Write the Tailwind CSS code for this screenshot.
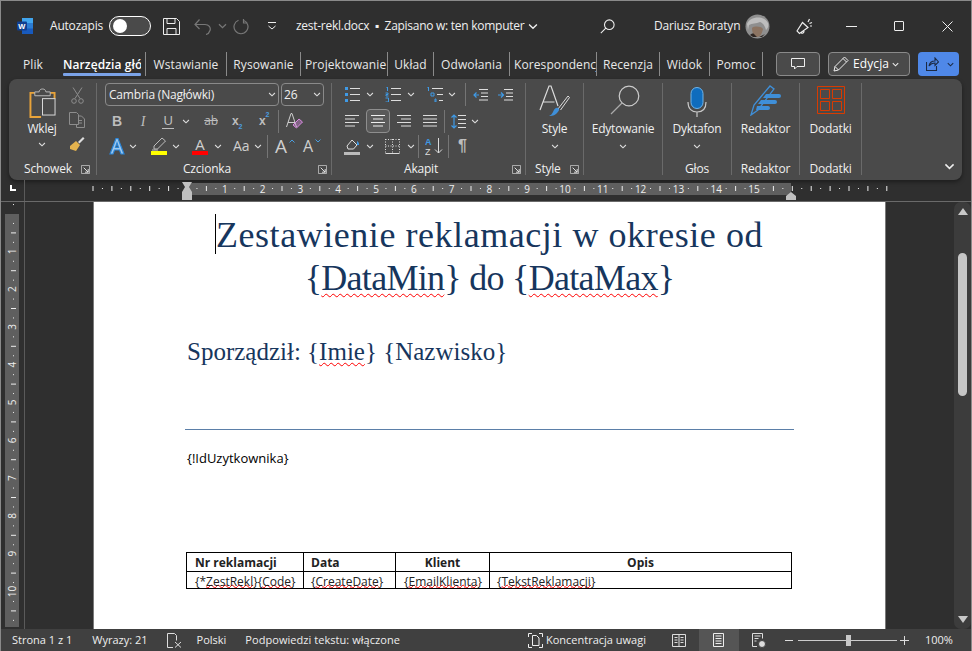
<!DOCTYPE html>
<html>

<head>
  <meta charset="UTF-8">
  <meta name="viewport" content="width=device-width, initial-scale=1.0">
  <script src="https://cdn.jsdelivr.net/npm/@tailwindcss/browser@4"></script>
  <title>zest-rekl.docx</title>
</head>

<body class="bg-[#2f2f2f]">
  <svg class="hidden">
    <symbol id="chev" viewBox="0 0 9 6"><path d="M1 1.2 4.5 4.6 8 1.2" fill="none" stroke="currentColor" stroke-width="1.3" /></symbol>
    <symbol id="launch" viewBox="0 0 10 10"><path d="M.5.5h9v9h-9z" fill="none" stroke="#bbb" /><path d="M3 3l5 5M8 4.5V8H4.5" fill="none" stroke="#eee" /></symbol>
    <symbol id="lines" viewBox="0 0 14 12"><path d="M0 .5h14M0 4h14M0 7.5h14M0 11h14" stroke="#ddd" fill="none" /></symbol>
  </svg>

  <div class="flex h-[651px] w-[972px] flex-col overflow-hidden border-x border-[#8a8a8a] border-t bg-[#2f2f2f] font-['Open_Sans','Noto_Sans',sans-serif] text-[12px] text-[#f0f0f0]">

    <!-- title bar -->
    <div class="flex h-[49px] shrink-0 items-center pt-[1px]">
      <svg class="ml-[16px] h-[18px] w-[17px]" viewBox="0 0 17 18">
        <path d="M5 1h10a1 1 0 0 1 1 1v14a1 1 0 0 1-1 1H5z" fill="#2b7cd3" />
        <path d="M5 1h11v5H5z" fill="#41a5ee" />
        <path d="M5 11.500h11V17H5z" fill="#185abd" />
        <rect x="0" y="4.500" width="10" height="9" rx="1" fill="#103f91" />
        <text x="1.300" y="12" fill="#fff" font-size="7.500" font-weight="700" font-family="Liberation Sans">W</text>
      </svg>
      <span class="ml-[16px] w-[52px] whitespace-nowrap tracking-[-0.2px]">Autozapis</span>
      <div class="ml-[7px] flex h-[20px] w-[42px] items-center rounded-full border border-white bg-[#4a4a4a] pl-[3px]">
        <div class="h-[14px] w-[14px] rounded-full bg-white"></div>
      </div>
      <svg class="ml-[12px] h-[17px] w-[17px]" viewBox="0 0 17 17" fill="none" stroke="#eee">
        <path d="M.5.500h13l3 3v13H.5zM4 .500v5h8v-5M4 16.500v-6h9v6" />
      </svg>
      <svg class="ml-[14px] h-[17px] w-[19px]" viewBox="0 0 19 17" fill="none" stroke="#777" stroke-width="1.200">
        <path d="M1 6.500h10a5.500 5.500 0 0 1 0 0c4 0 6 3 5 6-.600 2-2 3.500-4 4M5.500 1.500 1 6.500l4.500 4.500" />
      </svg>
      <svg class="ml-[5px] h-[6px] w-[9px] text-[#777]"><use href="#chev" /></svg>
      <svg class="ml-[6px] h-[17px] w-[17px]" viewBox="0 0 17 17" fill="none" stroke="#777" stroke-width="1.200">
        <path d="M10.500 2.200a7 7 0 1 1-5 0M10.500 1v4h4" />
      </svg>
      <svg class="ml-[17px] h-[8px] w-[10px]" viewBox="0 0 10 8" fill="none" stroke="#eee">
        <path d="M1 .500h8M1.500 4 5 7l3.500-3" />
      </svg>
      <span class="ml-[19px] w-[231px] whitespace-nowrap tracking-[-0.27px]">zest-rekl.docx&nbsp; ▪ &nbsp;Zapisano w: ten komputer</span>
      <svg class="ml-[1px] h-[7px] w-[10px] text-[#eee]"><use href="#chev" /></svg>
      <svg class="ml-[62px] h-[15px] w-[15px]" viewBox="0 0 15 15" fill="none" stroke="#eee" stroke-width="1.100">
        <circle cx="9.300" cy="5.700" r="4.800" /><path d="M5.800 9.200 .8 14.200" />
      </svg>
      <span class="ml-[39px] w-[83px] whitespace-nowrap tracking-[-0.2px]">Dariusz Boratyn</span>
      <svg class="ml-[8px] h-[25px] w-[25px]" viewBox="0 0 25 25">
        <circle cx="12.500" cy="12.500" r="12" fill="#8f8f8f" />
        <path d="M2 10C4 3 18 0 23 9c1 3 0 5-2 7-1-4-3-7-6-8-4 2-8 1-11 3l-1 5z" fill="#bdbdbd" />
        <path d="M7 14c2-2 9-2 11 1-1 5-3 8-6 8s-5-4-5-9z" fill="#8c7462" />
        <path d="M5 21c1-1 3-2 4-1l3 3H8zM20 20l-3 3h-3z" fill="#2f2723" />
      </svg>
      <svg class="ml-[26px] h-[18px] w-[17px]" viewBox="0 0 17 18" fill="none" stroke="#eee" stroke-width="1.200">
        <path d="M1 14 6.500 5.500 12 10.500 3.500 16.500zM5 15.500c1.500 1.500 3 .5 3-1.500M12 5l1.500-3M13.500 6.500 16 5.500M14 9h2" />
      </svg>
      <div class="ml-[33px] h-[1px] w-[11px] bg-[#eee]"></div>
      <div class="ml-[37px] h-[10px] w-[10px] rounded-[1px] border border-[#eee]"></div>
      <svg class="ml-[38px] h-[11px] w-[11px]" viewBox="0 0 11 11" stroke="#eee"><path d="M.5.500l10 10M10.500.500l-10 10" /></svg>
    </div>

    <!-- tabs -->
    <div class="flex h-[29px] shrink-0 items-start pt-[2px] text-[12px] tracking-[0.1px] text-[#e8e8e8]">
      <div class="ml-[22px] flex h-[24px] items-center pt-[2px]">Plik</div>
      <div class="relative ml-[20px] flex h-[24px] w-[78px] items-center overflow-hidden pt-[2px] whitespace-nowrap font-semibold text-white">Narzędzia główne
        <div class="absolute right-0 bottom-0 left-0 h-[3px] rounded-[1px] bg-[#7ba3e8]"></div>
      </div>
      <div class="ml-[4px] flex h-[24px] items-start [&>div]:flex [&>div]:h-[24px] [&>div]:items-center [&>div]:justify-center [&>div]:overflow-hidden [&>div]:pt-[2px] [&>div]:whitespace-nowrap [&>div]:border-l [&>div]:border-[#8a8a8a]">
        <div class="w-[81px]">Wstawianie</div>
        <div class="w-[74px]">Rysowanie</div>
        <div class="w-[87px] justify-start! pl-[4px]">Projektowanie</div>
        <div class="w-[46px]">Układ</div>
        <div class="w-[76px]">Odwołania</div>
        <div class="w-[87px] justify-start! pl-[4px]">Korespondencja</div>
        <div class="w-[63px]">Recenzja</div>
        <div class="w-[50px]">Widok</div>
        <div class="w-[53px]">Pomoc</div>
        <div class="w-0"></div>
      </div>
      <div class="ml-[13px] flex h-[24px] w-[44px] items-center justify-center rounded-[4px] border border-[#8a8a8a] bg-[#4a4a4a]">
        <svg class="h-[12px] w-[14px]" viewBox="0 0 14 12" fill="none" stroke="#eee"><path d="M.5.500h13v8H6L3.500 11V8.500h-3z" /></svg>
      </div>
      <div class="ml-[8px] flex h-[24px] w-[82px] items-center rounded-[4px] border border-[#8a8a8a] bg-[#4a4a4a] pl-[4px] text-white">
        <svg class="h-[16px] w-[16px]" viewBox="0 0 16 16" fill="none" stroke="#eee"><path d="M1 15l1-4.500L11.500 1 15 4.500 5.500 14zM2 10.500 5.500 14M10 2.500 13.500 6" /></svg>
        <span class="ml-[4px]">Edycja</span>
        <svg class="ml-[3px] h-[5px] w-[7px] text-[#eee]"><use href="#chev" /></svg>
      </div>
      <div class="ml-[8px] flex h-[24px] w-[41px] items-center rounded-[4px] bg-[#4f88e8] pl-[8px]">
        <svg class="h-[14px] w-[13px]" viewBox="0 0 13 14" fill="none" stroke="#1c2b45" stroke-width="1.100"><path d="M.5 5v8.500h10V9M3 9c.5-3 3-5 6-5V1l3.500 4L9 8.500V6C6.500 6 4.500 7 3 9z" /></svg>
        <svg class="ml-[8px] h-[5px] w-[7px] text-[#1c2b45]"><use href="#chev" /></svg>
      </div>
    </div>

    <!-- ribbon -->
    <div class="ml-[8px] flex h-[101px] w-[953px] shrink-0 items-stretch rounded-lg bg-[#4a4a4a] pt-[4px] pb-[5px] tracking-[-0.2px] text-[#f0f0f0] shadow-[0_2px_4px_rgba(0,0,0,0.4)]">

      <!-- schowek -->
      <div class="flex w-[88px] shrink-0 flex-col border-r border-[#6a6a6a]">
        <div class="flex h-[80px]">
          <div class="ml-[13px] flex w-[40px] flex-col items-center">
            <svg class="mt-[4px] h-[31px] w-[27px]" viewBox="0 0 28 32" fill="none">
              <path d="M6 6H1.500v25h11" stroke="#e8a33a" stroke-width="2" /><path d="M22 6h4.500v6" stroke="#e8a33a" stroke-width="2" />
              <path d="M6 9V5h4.500c0-4 7-4 7 0H22v4z" stroke="#bbb" />
              <rect x="14" y="12" width="13" height="17" fill="#4a4a4a" stroke="#ddd" />
            </svg>
            <span class="mt-[2px]">Wklej</span>
            <svg class="mt-[4px] h-[5px] w-[8px] text-[#ddd]"><use href="#chev" /></svg>
          </div>
          <div class="ml-[7px] flex flex-col items-center gap-[8px] pt-[4px]">
            <svg class="h-[17px] w-[13px]" viewBox="0 0 13 17" fill="none" stroke="#8d8d8d"><path d="M2 .5l7 11M11 .5l-7 11" /><circle cx="3" cy="14" r="2.300" /><circle cx="10" cy="14" r="2.300" /></svg>
            <svg class="h-[16px] w-[16px]" viewBox="0 0 16 16" fill="none" stroke="#8d8d8d"><path d="M.5.500h7l2 2v10h-9zM9.500 4h3l3 3v8.500h-8v-3M9 8.500h4M9 11h4" /></svg>
            <svg class="h-[15px] w-[16px]" viewBox="0 0 16 15"><path d="M9 6l5-5 1.500 1.500-5 5z" fill="#ddd" /><path d="M1 10l6-5 4 4-4 6-6-2z" fill="#e4b34e" /></svg>
          </div>
        </div>
        <div class="flex h-[12px] items-center justify-between pr-[6px] pl-[15px]">
          <span>Schowek</span>
          <svg class="h-[9px] w-[9px]"><use href="#launch" /></svg>
        </div>
      </div>

      <!-- czcionka -->
      <div class="flex w-[235px] shrink-0 flex-col border-r border-[#6a6a6a] pl-[8px]">
        <div class="flex h-[24px] gap-[2px]">
          <div class="flex h-[23px] w-[174px] items-center justify-between rounded-[4px] border border-[#8a8a8a] pr-[2px] pl-[3px]">
            <span>Cambria (Nagłówki)</span>
            <svg class="h-[5px] w-[8px] text-[#ddd]"><use href="#chev" /></svg>
          </div>
          <div class="flex h-[23px] w-[43px] items-center justify-between rounded-[4px] border border-[#8a8a8a] pr-[2px] pl-[2px]">
            <span>26</span>
            <svg class="h-[5px] w-[8px] text-[#ddd]"><use href="#chev" /></svg>
          </div>
        </div>

        <div class="mt-[2px] flex h-[26px] items-center text-[#bdbdbd]">
          <span class="ml-[6px] w-[12px] text-center font-['Liberation_Sans'] text-[14px] font-bold">B</span>
          <span class="ml-[14px] w-[12px] text-center font-['Liberation_Serif'] text-[14px] italic">I</span>
          <span class="ml-[13px] w-[12px] border-b border-[#bdbdbd] text-center font-['Liberation_Sans'] text-[13px] leading-[15px]">U</span>
          <svg class="ml-[8px] h-[5px] w-[8px] text-[#ddd]"><use href="#chev" /></svg>
          <span class="ml-[13px] w-[16px] text-center text-[12px] leading-[12px] line-through">ab</span>
          <span class="ml-[13px] flex w-[13px] items-end font-['Liberation_Sans'] text-[12px] font-bold">x<span class="mb-[-2px] text-[7px] text-[#4a9ee0]">2</span></span>
          <span class="ml-[14px] flex w-[13px] items-start font-['Liberation_Sans'] text-[12px] font-bold">x<span class="mt-[-2px] text-[7px] text-[#4a9ee0]">2</span></span>
          <div class="ml-[6px] h-[23px] w-[1px] bg-[#757575]"></div>
          <svg class="ml-[7px] h-[18px] w-[17px]" viewBox="0 0 17 18" fill="none"><path d="M.5 15 5 1.500h1L10.500 15M2 10.500h7" stroke="#cfcfcf" /><path d="M7 13l6-6 3.500 3-6 6z" stroke="#d88ae0" fill="#d88ae0" fill-opacity=".4" /></svg>
        </div>

        <div class="flex h-[26px] items-center text-[#cfcfcf]">
          <svg class="ml-[4px] h-[18px] w-[16px]" viewBox="0 0 16 18" fill="none"><path d="M1 17 7 1.500h2L15 17h-3l-1.500-4h-5L4 17zM6.500 10.500h3L8 6z" fill="#9ec9ee" stroke="#2a85d8" stroke-width="1.200" /></svg>
          <svg class="ml-[4px] h-[5px] w-[8px] text-[#ddd]"><use href="#chev" /></svg>
          <div class="ml-[14px] flex w-[16px] flex-col items-center">
            <svg class="h-[14px] w-[15px]" viewBox="0 0 15 14" fill="none" stroke="#bdbdbd"><path d="M2 9 10 1l3.500 3-8 8H2zM0 13h6" /></svg>
            <div class="h-[4px] w-[16px] bg-[#ffff00]"></div>
          </div>
          <svg class="ml-[5px] h-[5px] w-[8px] text-[#ddd]"><use href="#chev" /></svg>
          <div class="ml-[12px] flex w-[16px] flex-col items-center">
            <span class="h-[14px] text-[15px] leading-[14px]">A</span>
            <div class="h-[4px] w-[16px] bg-[#ff0000]"></div>
          </div>
          <svg class="ml-[6px] h-[5px] w-[8px] text-[#ddd]"><use href="#chev" /></svg>
          <span class="ml-[11px] w-[18px] text-[14px] leading-[14px]">Aa</span>
          <svg class="ml-[3px] h-[5px] w-[8px] text-[#ddd]"><use href="#chev" /></svg>
          <div class="ml-[5px] h-[23px] w-[1px] bg-[#757575]"></div>
          <span class="ml-[7px] w-[13px] text-[19px] leading-[20px]">A</span>
          <svg class="mb-[10px] ml-[1px] h-[4px] w-[6px]" viewBox="0 0 6 4" fill="none" stroke="#4a9ee0"><path d="M.5 3.500 3 1l2.500 2.500" /></svg>
          <span class="ml-[8px] w-[11px] text-[16px] leading-[20px]">A</span>
          <svg class="mb-[10px] ml-[1px] h-[4px] w-[6px]" viewBox="0 0 6 4" fill="none" stroke="#4a9ee0"><path d="M.5.500 3 3 5.500.5" /></svg>
        </div>

        <div class="mt-[4px] flex h-[12px] items-center justify-between pr-[4px]">
          <span class="ml-[78px]">Czcionka</span>
          <svg class="h-[9px] w-[9px]"><use href="#launch" /></svg>
        </div>
      </div>

      <!-- akapit -->
      <div class="flex w-[194px] shrink-0 flex-col border-r border-[#6a6a6a]">
        <div class="flex h-[24px] items-center">
          <svg class="ml-[13px] h-[15px] w-[15px]" viewBox="0 0 15 15"><path d="M0 0h3v3H0zM0 6h3v3H0zM0 12h3v3H0z" fill="#3f9ae6" /><path d="M5 1.500h10M5 7.500h10M5 13.500h10" stroke="#ddd" /></svg>
          <svg class="ml-[6px] h-[5px] w-[8px] text-[#ddd]"><use href="#chev" /></svg>
          <svg class="ml-[11px] h-[15px] w-[16px]" viewBox="0 0 16 15"><path d="M1 0h1.500v4M.5 6h2.500v1.500H1V9h2.500M.5 11h3v4h-3" fill="none" stroke="#3f9ae6" /><path d="M6 1.500h10M6 7.500h10M6 13.500h10" stroke="#ddd" /></svg>
          <svg class="ml-[6px] h-[5px] w-[8px] text-[#ddd]"><use href="#chev" /></svg>
          <svg class="ml-[11px] h-[15px] w-[17px]" viewBox="0 0 17 15"><path d="M1 0h1.500v4M5 6h3v3H5zM9 12h1v3H9z" fill="none" stroke="#3f9ae6" /><path d="M6 1.500h11M11 7.500h6M13 13.500h4" stroke="#ddd" /></svg>
          <svg class="ml-[5px] h-[5px] w-[8px] text-[#ddd]"><use href="#chev" /></svg>
          <div class="ml-[9px] h-[23px] w-[1px] bg-[#757575]"></div>
          <svg class="ml-[7px] h-[12px] w-[15px]" viewBox="0 0 15 12"><path d="M6 .5h9M8 4h7M8 7.500h7M6 11h9" stroke="#ddd" /><path d="M6 6H1M3.500 3.500 1 6l2.500 2.500" fill="none" stroke="#3f9ae6" stroke-width="1.200" /></svg>
          <svg class="ml-[10px] h-[12px] w-[15px]" viewBox="0 0 15 12"><path d="M6 .5h9M8 4h7M8 7.500h7M6 11h9" stroke="#ddd" /><path d="M0 6h5M3 3.500 5.500 6 3 8.500" fill="none" stroke="#3f9ae6" stroke-width="1.200" /></svg>
        </div>

        <div class="mt-[2px] flex h-[26px] items-center">
          <svg class="ml-[13px] h-[12px] w-[14px]" viewBox="0 0 14 12"><path d="M0 .5h14M0 4h10M0 7.500h14M0 11h10" stroke="#ddd" /></svg>
          <div class="ml-[7px] flex h-[24px] w-[24px] items-center justify-center rounded-[4px] border border-[#8e8e8e] bg-[#5a5a5a]">
            <svg class="h-[12px] w-[14px]" viewBox="0 0 14 12"><path d="M0 .5h14M2 4h10M0 7.500h14M2 11h10" stroke="#eee" /></svg>
          </div>
          <svg class="ml-[7px] h-[12px] w-[14px]" viewBox="0 0 14 12"><path d="M0 .5h14M4 4h10M0 7.500h14M4 11h10" stroke="#ddd" /></svg>
          <svg class="ml-[12px] h-[12px] w-[14px]"><use href="#lines" /></svg>
          <div class="ml-[7px] h-[23px] w-[1px] bg-[#757575]"></div>
          <svg class="ml-[6px] h-[15px] w-[15px]" viewBox="0 0 15 15"><path d="M3 1v13M.5 3.500 3 1l2.500 2.500M.5 11.500 3 14l2.500-2.500" fill="none" stroke="#3f9ae6" stroke-width="1.200" /><path d="M7 1.500h8M7 5.500h8M7 9.500h8M7 13.500h8" stroke="#ddd" /></svg>
          <svg class="ml-[5px] h-[5px] w-[8px] text-[#ddd]"><use href="#chev" /></svg>
        </div>

        <div class="flex h-[26px] items-center">
          <svg class="ml-[12px] h-[17px] w-[16px]" viewBox="0 0 16 17"><path d="M3 8l5-6 5 5-3.500 4H4z" fill="none" stroke="#ddd" /><path d="M13 3c2 1 2 3 2 4h-2z" fill="#3f9ae6" /><path d="M0 14h16v3H0z" fill="#bbb" /></svg>
          <svg class="ml-[6px] h-[5px] w-[8px] text-[#ddd]"><use href="#chev" /></svg>
          <svg class="ml-[11px] h-[16px] w-[15px]" viewBox="0 0 15 16" fill="none" stroke="#ddd"><path d="M.5 15.500h14" /><path d="M.5 1.500h14M.5 1v14M14.500 1v14M7.500 1v14M.5 8h14" stroke-dasharray="1 1.500" /></svg>
          <svg class="ml-[7px] h-[5px] w-[8px] text-[#ddd]"><use href="#chev" /></svg>
          <div class="ml-[3px] h-[23px] w-[1px] bg-[#757575]"></div>
          <svg class="ml-[6px] h-[18px] w-[18px]" viewBox="0 0 18 18" fill="none"><text x="0" y="8" font-size="9" font-weight="700" fill="#3f9ae6" font-family="Liberation Sans">A</text><text x="0" y="17.500" font-size="9" fill="#ddd" font-family="Liberation Sans">Z</text><path d="M13.500 1v15M10 12.500l3.500 3.500 3.500-3.500" stroke="#ddd" /></svg>
          <div class="ml-[5px] h-[23px] w-[1px] bg-[#757575]"></div>
          <span class="ml-[9px] font-['Liberation_Sans'] text-[16px] leading-[16px] font-bold text-[#bdbdbd]">¶</span>
        </div>

        <div class="mt-[4px] flex h-[12px] items-center justify-between pr-[4px]">
          <span class="ml-[72px]">Akapit</span>
          <svg class="h-[9px] w-[9px]"><use href="#launch" /></svg>
        </div>
      </div>

      <!-- style -->
      <div class="flex w-[58px] shrink-0 flex-col border-r border-[#6a6a6a]">
        <div class="flex h-[80px] flex-col items-center">
          <svg class="mt-[2px] h-[33px] w-[31px]" viewBox="0 0 31 33" fill="none">
            <path d="M1 25 10 1h2l7 20M4.500 17h11" stroke="#ddd" stroke-width="1.200" />
            <path d="M19 24 29 11l1.500 1.500-9 12.500" stroke="#ddd" /><path d="M10 31c5 0 6-1 8-3 2-2 3-4 1-5-3-1-4 2-5 4-1 2-2 3-4 4z" fill="#3f8fd8" />
          </svg>
          <span class="mt-[2px]">Style</span>
          <svg class="mt-[6px] h-[5px] w-[8px] text-[#ddd]"><use href="#chev" /></svg>
        </div>
        <div class="flex h-[12px] items-center justify-between pr-[4px] pl-[9px]">
          <span>Style</span>
          <svg class="h-[9px] w-[9px]"><use href="#launch" /></svg>
        </div>
      </div>

      <!-- edytowanie -->
      <div class="flex w-[79px] shrink-0 flex-col items-center border-r border-[#6a6a6a]">
        <svg class="mt-[2px] ml-[3px] h-[30px] w-[30px]" viewBox="0 0 30 30" fill="none" stroke="#ccc" stroke-width="1.200">
          <circle cx="19" cy="11" r="9.800" /><path d="M12 18 1 29" stroke="#aaa" />
        </svg>
        <span class="mt-[5px]">Edytowanie</span>
        <svg class="mt-[6px] h-[5px] w-[8px] text-[#ddd]"><use href="#chev" /></svg>
      </div>

      <!-- glos -->
      <div class="flex w-[69px] shrink-0 flex-col items-center border-r border-[#6a6a6a]">
        <div class="flex h-[80px] flex-col items-center">
          <svg class="mt-[4px] h-[30px] w-[20px]" viewBox="0 0 20 30" fill="none">
            <rect x="4" y="0.500" width="12" height="21" rx="6" fill="#0f6cbd" stroke="#6fb4ea" />
            <path d="M1 15c0 7 4 10 9 10s9-3 9-10M10 25v5" stroke="#c8c8c8" stroke-width="1.200" />
          </svg>
          <span class="mt-[3px]">Dyktafon</span>
          <svg class="mt-[6px] h-[5px] w-[8px] text-[#ddd]"><use href="#chev" /></svg>
        </div>
        <span class="h-[12px] leading-[12px]">Głos</span>
      </div>

      <!-- redaktor -->
      <div class="flex w-[68px] shrink-0 flex-col items-center border-r border-[#6a6a6a]">
        <div class="flex h-[80px] flex-col items-center">
          <svg class="mt-[2px] h-[31px] w-[31px]" viewBox="0 0 31 31" fill="none">
            <path d="M1 30 4 20 20 1l4 3L8 25z" stroke="#3f8fd8" stroke-width="1.300" />
            <path d="M16 9h13a2 2 0 0 1 0 4H13zM11 15h14a2 2 0 0 1 0 4H8zM7 21h11a2 2 0 0 1 0 4H6z" fill="#3f8fd8" />
          </svg>
          <span class="mt-[4px]">Redaktor</span>
        </div>
        <span class="h-[12px] leading-[12px]">Redaktor</span>
      </div>

      <!-- dodatki -->
      <div class="flex w-[62px] shrink-0 flex-col items-center border-r border-[#6a6a6a]">
        <div class="flex h-[80px] flex-col items-center">
          <svg class="mt-[3px] h-[28px] w-[28px]" viewBox="0 0 28 28" fill="none" stroke="#d83b01">
            <path d="M.5.500h27v27H.5zM3.500 3.500h9v9h-9zM15.500 3.500h9v9h-9zM3.500 15.500h9v9h-9zM15.500 15.500h9v9h-9z" />
          </svg>
          <span class="mt-[6px]">Dodatki</span>
        </div>
        <span class="h-[12px] leading-[12px]">Dodatki</span>
      </div>

      <div class="flex flex-1 items-end justify-end pr-[7px] pb-[5px]">
        <svg class="h-[7px] w-[11px] text-[#eee]"><use href="#chev" /></svg>
      </div>
    </div>

    <!-- horizontal ruler -->
    <div class="flex h-[22px] shrink-0 items-start border-b border-[#6a6a6a]">
      <div class="relative h-[21px] w-[24px] shrink-0 border-r border-[#5a5a5a]">
        <div class="absolute top-[5px] left-[9px] h-[6px] w-[6px] border-b-2 border-l-2 border-white"></div>
      </div>
      <svg id="hruler" class="h-[21px] w-[946px]" viewBox="24 180 946 21"></svg>
    </div>

    <!-- document area -->
    <div class="flex min-h-0 flex-1">
      <div class="relative w-[24px] shrink-0 border-r border-[#5a5a5a]">
        <svg id="vruler" class="h-[425px] w-[23px]" viewBox="0 203 23 425"></svg>
      </div>

      <div class="w-[68px] shrink-0"></div>

      <!-- page -->
      <div class="relative w-[793px] shrink-0 overflow-hidden border-x border-[#7a7a7a] bg-white font-['Liberation_Serif',serif] text-[#17365d]">
        <div class="absolute top-[12px] left-[121px] h-[40px] w-[1px] bg-black"></div>
        <h1 class="mt-[12px] text-center text-[36px] leading-[43px] tracking-[0.55px]">
          Zestawienie reklamacji w okresie od<br>
          <span class="tracking-[-0.7px]">{<span class="underline decoration-[#ff0000] decoration-wavy decoration-1 underline-offset-[3px]">DataMin</span>} do {<span class="underline decoration-[#ff0000] decoration-wavy decoration-1 underline-offset-[3px]">DataMax</span>}</span>
        </h1>
        <p class="mt-[36px] ml-[93px] text-[25px] leading-[32px]">Sporządził: {<span class="underline decoration-[#ff0000] decoration-wavy decoration-1 underline-offset-[2px]">Imie</span>} {Nazwisko}</p>

        <div class="mt-[61px] ml-[91px] h-[1px] w-[609px] bg-[#5b7fa8]"></div>

        <p class="mt-[20px] ml-[93px] font-['Open_Sans',sans-serif] text-[13px] leading-[17px] text-black">{!IdUzytkownika}</p>

        <table class="mt-[85px] ml-[92px] w-[606px] table-fixed border-collapse border border-black font-['Open_Sans',sans-serif] text-[12px] leading-[16px] text-[#222]">
          <tr class="h-[19px] font-bold">
            <td class="w-[117px] border border-black pt-[2px] pl-[8px]">Nr reklamacji</td>
            <td class="w-[92px] border border-black pt-[2px] pl-[7px]">Data</td>
            <td class="w-[94px] border border-black pt-[2px] text-center">Klient</td>
            <td class="border border-black pt-[2px] text-center">Opis</td>
          </tr>
          <tr class="h-[17px]">
            <td class="overflow-hidden border border-black"><div class="h-[16px] overflow-hidden pt-[2px] pl-[8px] whitespace-nowrap">{*<span class="underline decoration-[#ff0000] decoration-wavy decoration-1 [text-decoration-skip-ink:none] [text-underline-offset:-2px]">ZestRekl</span>}{<span class="underline decoration-[#ff0000] decoration-wavy decoration-1 [text-decoration-skip-ink:none] [text-underline-offset:-2px]">Code</span>}</div></td>
            <td class="overflow-hidden border border-black"><div class="h-[16px] overflow-hidden pt-[2px] pl-[7px] whitespace-nowrap">{<span class="underline decoration-[#ff0000] decoration-wavy decoration-1 [text-decoration-skip-ink:none] [text-underline-offset:-2px]">CreateDate</span>}</div></td>
            <td class="overflow-hidden border border-black"><div class="h-[16px] overflow-hidden pt-[2px] pl-[8px] whitespace-nowrap">{<span class="underline decoration-[#ff0000] decoration-wavy decoration-1 [text-decoration-skip-ink:none] [text-underline-offset:-2px]">EmailKlienta</span>}</div></td>
            <td class="overflow-hidden border border-black"><div class="h-[16px] overflow-hidden pt-[2px] pl-[7px] whitespace-nowrap">{<span class="underline decoration-[#ff0000] decoration-wavy decoration-1 [text-decoration-skip-ink:none] [text-underline-offset:-2px]">TekstReklamacji</span>}</div></td>
          </tr>
        </table>
      </div>

      <div class="flex-1"></div>

      <!-- scrollbar -->
      <div class="flex w-[17px] shrink-0 flex-col items-center rounded-[7px] bg-[#3c3c3c] pt-[6px] pb-[6px]">
        <div class="h-0 w-0 border-x-[5px] border-b-[7px] border-x-transparent border-b-[#c8c8c8]"></div>
        <div class="mt-[38px] h-[143px] w-[9px] rounded-full bg-[#c6c6c6]"></div>
        <div class="mt-auto h-0 w-0 border-x-[5px] border-t-[7px] border-x-transparent border-t-[#c8c8c8]"></div>
      </div>
    </div>

    <!-- status bar -->
    <div class="flex h-[22px] shrink-0 items-center bg-[#404040] text-[11px] text-[#eee]">
      <span class="ml-[11px]">Strona 1 z 1</span>
      <span class="ml-[20px]">Wyrazy: 21</span>
      <svg class="ml-[19px] h-[15px] w-[15px]" viewBox="0 0 15 15" fill="none" stroke="#ddd"><path d="M6 14.500H.5V.5h7l2 2v5M8 9l6 5.500M14 9l-6 5.500" /></svg>
      <span class="ml-[15px]">Polski</span>
      <span class="ml-[19px] tracking-[0.05px]">Podpowiedzi tekstu: włączone</span>
      <svg class="ml-[128px] h-[15px] w-[15px]" viewBox="0 0 15 15" fill="none" stroke="#eee"><path d="M.5 4V.5H4M11 .5h3.500V4M14.500 11v3.500H11M4 14.500H.5V11M4.500 2.500h4l2.500 2.500v7.500h-6.500z" /></svg>
      <span class="ml-[3px]">Koncentracja uwagi</span>
      <svg class="ml-[26px] h-[13px] w-[14px]" viewBox="0 0 14 13" fill="none" stroke="#ddd"><path d="M.5.500h13v12H.5zM7 .5v12M2.500 3.500h3M2.500 6h3M2.500 8.500h3M8.500 3.500h3M8.500 6h3M8.500 8.500h3" /></svg>
      <div class="ml-[13px] flex h-[22px] w-[40px] items-center justify-center bg-[#555]">
        <svg class="h-[14px] w-[11px]" viewBox="0 0 11 14" fill="none" stroke="#eee"><path d="M.5.500h10v13H.5zM2.500 3h6M2.500 5.500h6M2.500 8h6M2.500 10.500h6" /></svg>
      </div>
      <svg class="ml-[13px] h-[15px] w-[14px]" viewBox="0 0 14 15" fill="none" stroke="#ddd"><path d="M5 13.500H.5V.5h10v5M2.500 3h6M2.500 5.500h4M2.500 8h2" /><circle cx="10" cy="11" r="3.500" fill="#ddd" stroke="#404040" /></svg>
      <div class="ml-[19px] h-[1px] w-[8px] bg-[#ddd]"></div>
      <div class="relative ml-[5px] h-[1px] w-[99px] bg-[#ccc]">
        <div class="absolute top-[-5px] left-[48px] h-[11px] w-[5px] bg-[#c8c8c8]"></div>
      </div>
      <svg class="ml-[3px] h-[9px] w-[9px]" viewBox="0 0 9 9" stroke="#ddd"><path d="M0 4.500h9M4.500 0v9" /></svg>
      <span class="ml-[16px]">100%</span>
    </div>
  </div>

  <script>
    // rulers, one tick mark per quarter unit
    const NS = 'http://www.w3.org/2000/svg';
    const UNIT = 37.8;

    function add(svg, tag, attrs, text) {
      const el = document.createElementNS(NS, tag);
      for (const k in attrs) el.setAttribute(k, attrs[k]);
      if (text) el.textContent = text;
      svg.appendChild(el);
    }

    const h = document.getElementById('hruler');
    add(h, 'rect', { x: 186, y: 183, width: 604, height: 12, fill: '#5f5f5f' });
    for (let i = -10; i <= 74; i++) {
      const x = 186 + i * UNIT / 4;
      if (x < 90 || x > 886) continue;
      if (i % 4 === 0) {
        if (i > 0 && i / 4 <= 15) add(h, 'text', { x: x, y: 193, fill: '#eee', 'font-size': 10, 'text-anchor': 'middle', 'font-family': 'Open Sans' }, String(i / 4));
        else if (i !== 0) add(h, 'rect', { x: x, y: 186, width: 1, height: 5, fill: '#eee' });
      } else if (i % 2 === 0) {
        add(h, 'rect', { x: x, y: 186, width: 1, height: 5, fill: '#eee' });
      } else {
        add(h, 'rect', { x: x, y: 188, width: 1, height: 1, fill: '#eee' });
      }
    }
    // indent markers
    add(h, 'path', { d: 'M181 182h10l-3 5 3 5v8h-10v-8l3-5z', fill: '#c0c0c0' });
    add(h, 'path', { d: 'M785 200v-4l5-4 5 4v4z', fill: '#c0c0c0' });

    const v = document.getElementById('vruler');
    add(v, 'rect', { x: 4, y: 215, width: 14, height: 413, fill: '#5f5f5f' });
    for (let i = -1; i <= 44; i++) {
      const y = 214.5 + i * UNIT / 4;
      if (y > 628) continue;
      if (i % 4 === 0 && i > 0) {
        add(v, 'text', { x: 0, y: 0, fill: '#eee', 'font-size': 10, 'text-anchor': 'middle', 'font-family': 'Open Sans', transform: 'translate(15 ' + y + ') rotate(-90)' }, String(i / 4));
      } else if (i % 2 === 0 && i !== 0) {
        add(v, 'rect', { x: 10, y: y, width: 5, height: 1, fill: '#eee' });
      } else if (i !== 0) {
        add(v, 'rect', { x: 12, y: y, width: 1, height: 1, fill: '#eee' });
      }
    }
  </script>
</body>

</html>
